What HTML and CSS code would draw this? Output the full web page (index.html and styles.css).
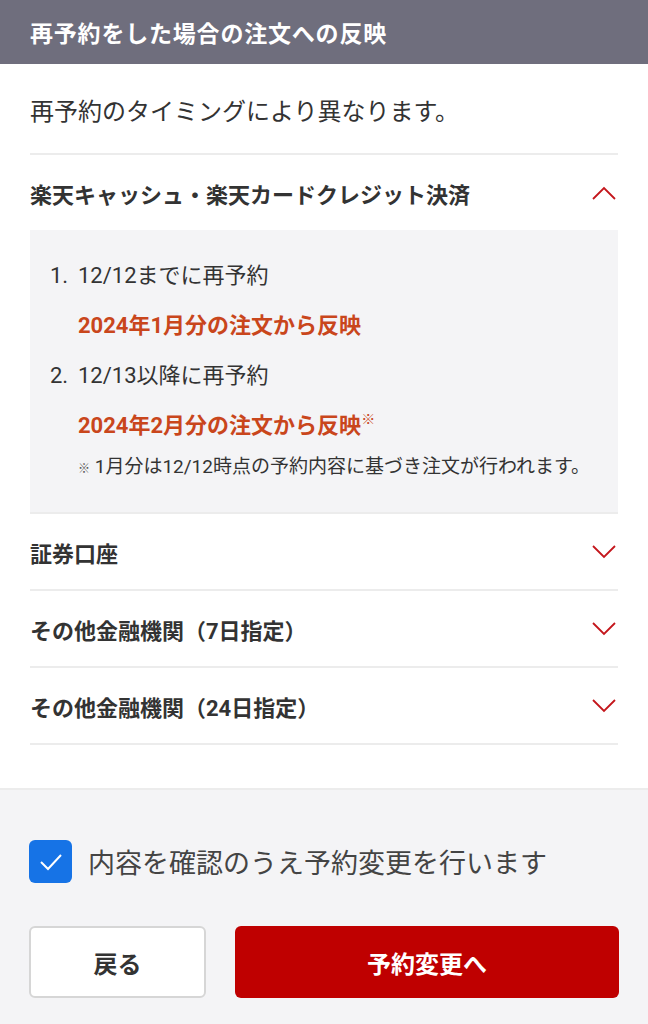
FILE: index.html
```html
<!DOCTYPE html>
<html lang="ja">
<head>
  <meta charset="UTF-8">
  <title>再予約をした場合の注文への反映</title>
  <link rel="stylesheet" href="styles.css">
</head>
<body>

  <header class="page-head">
    <h1>再予約をした場合の注文への反映</h1>
  </header>

  <main class="content">
    <p class="intro">再予約のタイミングにより異なります。</p>

    <div class="acc open">
      <div class="acc-head">
        <span>楽天キャッシュ・楽天カードクレジット決済</span>
        <svg class="chev" width="24" height="14" viewBox="0 0 24 14"><path d="M1 13 L12 2 L23 13" fill="none" stroke="#c4161c" stroke-width="1.8"/></svg>
      </div>
      <div class="acc-body">
        <ol class="steps">
          <li>
            <div class="step-title"><span class="num">1.</span>12/12までに再予約</div>
            <div class="step-result">2024年1月分の注文から反映</div>
          </li>
          <li>
            <div class="step-title"><span class="num">2.</span>12/13以降に再予約</div>
            <div class="step-result">2024年2月分の注文から反映<sup>※</sup></div>
            <p class="note"><span class="mark">※</span> 1月分は12/12時点の予約内容に基づき注文が行われます。</p>
          </li>
        </ol>
      </div>
    </div>

    <div class="acc">
      <div class="acc-head">
        <span>証券口座</span>
        <svg class="chev" width="24" height="14" viewBox="0 0 24 14"><path d="M1 1 L12 12 L23 1" fill="none" stroke="#c4161c" stroke-width="1.8"/></svg>
      </div>
    </div>

    <div class="acc">
      <div class="acc-head">
        <span>その他金融機関（7日指定）</span>
        <svg class="chev" width="24" height="14" viewBox="0 0 24 14"><path d="M1 1 L12 12 L23 1" fill="none" stroke="#c4161c" stroke-width="1.8"/></svg>
      </div>
    </div>

    <div class="acc">
      <div class="acc-head">
        <span>その他金融機関（24日指定）</span>
        <svg class="chev" width="24" height="14" viewBox="0 0 24 14"><path d="M1 1 L12 12 L23 1" fill="none" stroke="#c4161c" stroke-width="1.8"/></svg>
      </div>
    </div>
  </main>

  <footer class="actions">
    <label class="confirm">
      <span class="box">
        <svg width="43" height="43" viewBox="0 0 43 43"><path d="M12 22 L19 29 L32 15" fill="none" stroke="#fff" stroke-width="2"/></svg>
      </span>
      内容を確認のうえ予約変更を行います
    </label>
    <div class="buttons">
      <button class="btn btn-back">戻る</button>
      <button class="btn btn-next">予約変更へ</button>
    </div>
  </footer>

</body>
</html>
```

FILE: styles.css
```css
body {
  font-family: Roboto, "Noto Sans CJK JP", sans-serif;
  color: #333;
  background-color: #fff;
  margin: 0;
  padding: 0;
}

.page-head {
  background-color: #6f6e7d;
  height: 64px;
  padding: 0 30px;
  display: flex;
  align-items: center;
}

.page-head h1 {
  margin: 0;
  font-size: 23px;
  font-weight: bold;
  color: #fff;
  letter-spacing: 0.8px;
}

.content {
  padding: 0 30px 43px;
}

.intro {
  margin: 0;
  padding: 30px 0 23px;
  font-size: 24px;
  line-height: 36px;
  border-bottom: 2px solid #ececec;
}

.acc {
  border-bottom: 2px solid #ececec;
}

.acc-head {
  height: 75px;
  display: flex;
  align-items: center;
  justify-content: space-between;
  font-size: 22px;
  font-weight: bold;
}

.chev {
  margin-right: 2px;
}

.acc-body {
  background-color: #f4f4f6;
  padding: 21px 20px 27px;
}

.steps {
  list-style: none;
  margin: 0;
  padding: 0;
}

.step-title {
  font-size: 22px;
  line-height: 50px;
}

.num {
  display: inline-block;
  width: 28px;
}

.step-result {
  padding-left: 28px;
  font-size: 22px;
  line-height: 50px;
  font-weight: bold;
  color: #c9461c;
}

.step-result sup {
  font-size: 14px;
  font-weight: bold;
  vertical-align: 9px;
  line-height: 0;
}

.note {
  margin: 0;
  padding-left: 28px;
  font-size: 19px;
  line-height: 32px;
}

.note .mark {
  font-size: 12px;
  color: #555;
}

.actions {
  background-color: #f4f4f6;
  border-top: 2px solid #ececec;
  padding: 50px 29px 30px 29px;
}

.confirm {
  display: flex;
  align-items: center;
  gap: 16px;
  font-size: 27px;
  color: #444;
}

.box {
  width: 43px;
  height: 43px;
  border-radius: 6px;
  background-color: #1673e6;
  display: flex;
}

.buttons {
  display: grid;
  grid-template-columns: 177px 1fr;
  gap: 29px;
  margin-top: 43px;
}

.btn {
  height: 72px;
  border-radius: 6px;
  font-family: Roboto, "Noto Sans CJK JP", sans-serif;
  font-size: 24px;
  font-weight: bold;
  cursor: pointer;
}

.btn-back {
  background-color: #fff;
  color: #333;
  border: 2px solid #d6d6d6;
}

.btn-next {
  background-color: #bf0000;
  color: #fff;
  border: none;
}
```
